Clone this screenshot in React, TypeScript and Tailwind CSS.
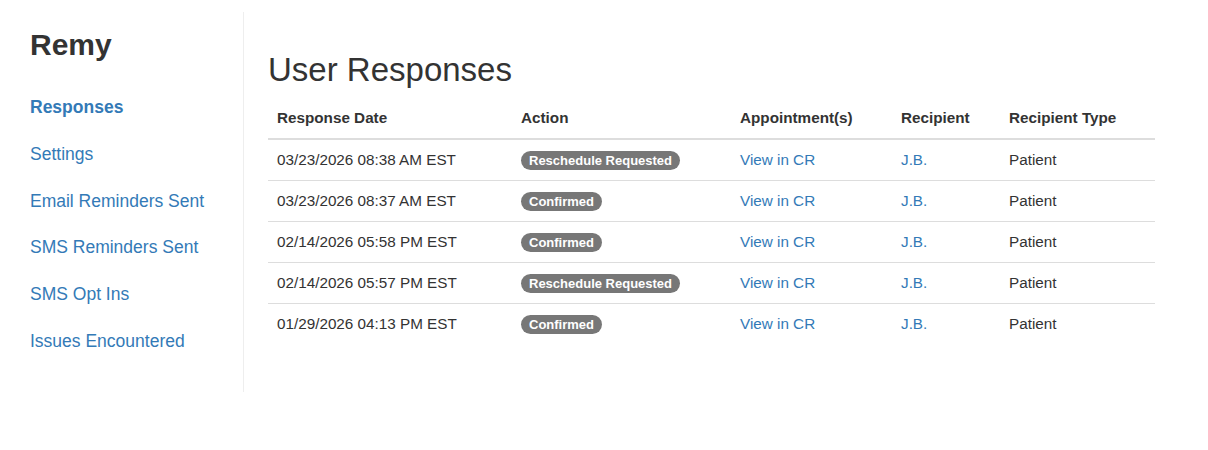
import React from 'react';

const NAV = [
  { label: 'Responses', active: true },
  { label: 'Settings' },
  { label: 'Email Reminders Sent' },
  { label: 'SMS Reminders Sent' },
  { label: 'SMS Opt Ins' },
  { label: 'Issues Encountered' },
];

const ROWS = [
  { date: '03/23/2026 08:38 AM EST', action: 'Reschedule Requested' },
  { date: '03/23/2026 08:37 AM EST', action: 'Confirmed' },
  { date: '02/14/2026 05:58 PM EST', action: 'Confirmed' },
  { date: '02/14/2026 05:57 PM EST', action: 'Reschedule Requested' },
  { date: '01/29/2026 04:13 PM EST', action: 'Confirmed' },
];

export default function App() {
  return (
    <div className="flex min-h-[450px] bg-white pt-[12px] font-['Liberation_Sans',Arial,sans-serif] text-[#333]">
      {/* Sidebar */}
      <aside className="h-[380px] w-[244px] shrink-0 border-r border-[#eee] pl-[30px] pt-[16px]">
        <h2 className="text-[30px] font-bold leading-[33px] text-[#333]">Remy</h2>
        <nav className="mt-[23px] flex flex-col">
          {NAV.map((item) => (
            <a
              key={item.label}
              href="#"
              className={
                item.active
                  ? 'py-[11px] text-[17.5px] font-bold leading-[24.8px] text-[#337ab7]'
                  : 'py-[11px] text-[17.5px] leading-[24.8px] text-[#337ab7]'
              }
            >
              {item.label}
            </a>
          ))}
        </nav>
      </aside>

      {/* Main */}
      <main className="pl-[24px] pt-[39px]">
        <h1 className="mb-[9px] text-[33px] leading-[38px] text-[#333]">User Responses</h1>
        <table className="w-[887px] table-fixed border-collapse text-left text-[15.25px]">
          <colgroup>
            <col className="w-[244px]" />
            <col className="w-[219px]" />
            <col className="w-[161px]" />
            <col className="w-[108px]" />
            <col className="w-[155px]" />
          </colgroup>
          <thead>
            <tr className="border-b-2 border-[#ddd]">
              <th className="px-[9px] py-[9px] font-bold leading-[22px]">Response Date</th>
              <th className="px-[9px] py-[9px] font-bold leading-[22px]">Action</th>
              <th className="px-[9px] py-[9px] font-bold leading-[22px]">Appointment(s)</th>
              <th className="px-[9px] py-[9px] font-bold leading-[22px]">Recipient</th>
              <th className="px-[9px] py-[9px] font-bold leading-[22px]">Recipient Type</th>
            </tr>
          </thead>
          <tbody>
            {ROWS.map((row, i) => (
              <tr key={i} className={i === 0 ? '' : 'border-t border-[#ddd]'}>
                <td className="px-[9px] py-[9px] leading-[22px]">{row.date}</td>
                <td className="px-[9px] py-[9px] leading-[22px]">
                  <span className="inline-block h-[19px] rounded-full bg-[#777] px-[8px] align-middle text-[13px] font-bold leading-[19px] text-white">
                    {row.action}
                  </span>
                </td>
                <td className="px-[9px] py-[9px] leading-[22px]">
                  <a href="#" className="text-[#337ab7]">View in CR</a>
                </td>
                <td className="px-[9px] py-[9px] leading-[22px]">
                  <a href="#" className="text-[#337ab7]">J.B.</a>
                </td>
                <td className="px-[9px] py-[9px] leading-[22px]">Patient</td>
              </tr>
            ))}
          </tbody>
        </table>
      </main>
    </div>
  );
}
